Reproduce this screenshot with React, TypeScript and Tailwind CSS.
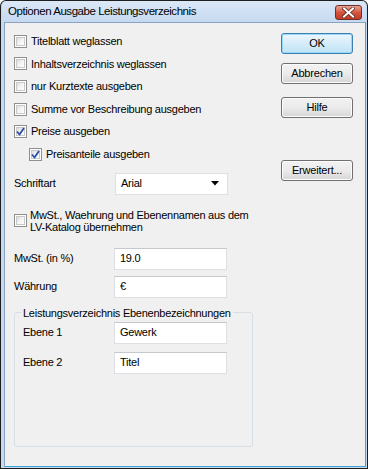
import React from 'react';

const font = { fontFamily: '"Liberation Sans", Arial, sans-serif' };

function Box({ checked }: { checked?: boolean }) {
  return (
    <span className="relative w-[13px] h-[13px] shrink-0 border border-[#8e8f8f] bg-white flex items-center justify-center">
      <span className="absolute inset-[1px] bg-gradient-to-br from-[#dcdcdc] via-[#f4f4f4] to-[#ffffff] border border-[#c9c9c9]" />
      {checked && (
        <svg className="relative" width="9" height="9" viewBox="0 0 9 9">
          <path d="M1 4.5 L3.5 7.5 L8 1" fill="none" stroke="#2b4ea7" strokeWidth="1.8" strokeLinejoin="round" />
        </svg>
      )}
    </span>
  );
}

function Check({ label, checked, indent }: { label: string; checked?: boolean; indent?: boolean }) {
  return (
    <div className={`flex items-center gap-[4px] h-[22.6px] ${indent ? 'pl-[15px]' : ''}`}>
      <Box checked={checked} />
      <span>{label}</span>
    </div>
  );
}

function Field({ value }: { value: string }) {
  return (
    <div className="w-[113px] h-[22px] bg-white border border-[#dcdfe3] border-t-[#c5c9ce] flex items-center px-[5px]">
      {value}
    </div>
  );
}

function Btn({ children, primary }: { children: React.ReactNode; primary?: boolean }) {
  return (
    <button
      className={`w-[72px] h-[21px] rounded-[3px] border text-[11px] tracking-[-0.2px] leading-none bg-gradient-to-b ${
        primary
          ? 'border-[#3c7fb1] from-[#ecf6fc] to-[#bfe3f6] shadow-[inset_0_0_0_1px_#97d8f6]'
          : 'border-[#707070] from-[#f2f2f2] via-[#ebebeb] to-[#d6d6d6] shadow-[inset_0_0_0_1px_#fcfcfc]'
      }`}
      style={font}
    >
      {children}
    </button>
  );
}

export default function App() {
  return (
    <div className="w-[368px] h-[469px] flex flex-col bg-[#1e1e1e] p-[1px] rounded-t-[6px] text-[11px] tracking-[-0.25px] text-black" style={font}>
      {/* title bar */}
      <div className="h-[21px] flex items-center justify-between pl-[6px] pr-[4px] rounded-t-[5px] bg-gradient-to-b from-[#dbe8f7] to-[#c6d9f0] border-x border-[#c7d9ef]">
        <span className="text-[11.5px] tracking-[-0.45px] text-black">Optionen Ausgabe Leistungsverzeichnis</span>
        <div className="w-[27px] h-[15px] mt-[1px] rounded-[3px] border border-[#6d2f2a] bg-gradient-to-b from-[#e8a493] via-[#d4553f] to-[#c23a24] flex items-center justify-center">
          <svg width="13" height="11" viewBox="0 0 13 11">
            <path d="M2 1.5 L11 9.5 M11 1.5 L2 9.5" stroke="#5b2a22" strokeWidth="3.6" strokeLinecap="square" />
            <path d="M2 1.5 L11 9.5 M11 1.5 L2 9.5" stroke="#ffffff" strokeWidth="2" strokeLinecap="square" />
          </svg>
        </div>
      </div>
      {/* frame */}
      <div className="flex-1 flex bg-[#c6d9f0] pl-[3px] pr-[1px] pb-[1px]">
        <div className="flex-1 flex bg-[#f0f0f0] border border-[#8aa3c2] border-r-[#3fa4d8] border-b-[#3fa4d8]">
          {/* left column */}
          <div className="w-[266px] pl-[9px] pt-[7px] flex flex-col">
            <Check label="Titelblatt weglassen" />
            <Check label="Inhaltsverzeichnis weglassen" />
            <Check label="nur Kurztexte ausgeben" />
            <Check label="Summe vor Beschreibung ausgeben" />
            <Check label="Preise ausgeben" checked />
            <Check label="Preisanteile ausgeben" checked indent />

            <div className="flex items-center h-[22px] mt-[7px]">
              <span className="w-[101px]">Schriftart</span>
              <div className="w-[113px] h-[22px] bg-white border border-[#dcdfe3] flex items-center justify-between px-[5px]">
                <span>Arial</span>
                <svg width="8" height="5" viewBox="0 0 8 5" className="mr-[3px]">
                  <path d="M0 0 H8 L4 4.5 Z" fill="#000" />
                </svg>
              </div>
            </div>

            <div className="flex items-center gap-[3px] mt-[14px]">
              <Box />
              <span className="leading-[12px]">
                MwSt., Waehrung und Ebenennamen aus dem
                <br />
                LV-Katalog übernehmen
              </span>
            </div>

            <div className="flex items-center h-[22px] mt-[15px]">
              <span className="w-[100px]">MwSt. (in %)</span>
              <Field value="19.0" />
            </div>
            <div className="flex items-center h-[22px] mt-[6px]">
              <span className="w-[100px]">Währung</span>
              <Field value="€" />
            </div>

            <div className="relative mt-[14px] w-[239px] h-[135px] border border-[#d5dfe5] rounded-[3px] pl-[8px] pt-[9px] flex flex-col">
              <span className="absolute -top-[8px] left-[6px] px-[2px] bg-[#f0f0f0]">
                Leistungsverzeichnis Ebenenbezeichnungen
              </span>
              <div className="flex items-center h-[22px]">
                <span className="w-[91px]">Ebene 1</span>
                <Field value="Gewerk" />
              </div>
              <div className="flex items-center h-[22px] mt-[8px]">
                <span className="w-[91px]">Ebene 2</span>
                <Field value="Titel" />
              </div>
            </div>
          </div>
          {/* right column */}
          <div className="flex-1 flex flex-col pl-[10px] pt-[10px]">
            <Btn primary>OK</Btn>
            <div className="mt-[9px]">
              <Btn>Abbrechen</Btn>
            </div>
            <div className="mt-[13px]">
              <Btn>Hilfe</Btn>
            </div>
            <div className="mt-[42px]">
              <Btn>Erweitert...</Btn>
            </div>
          </div>
        </div>
      </div>
    </div>
  );
}
